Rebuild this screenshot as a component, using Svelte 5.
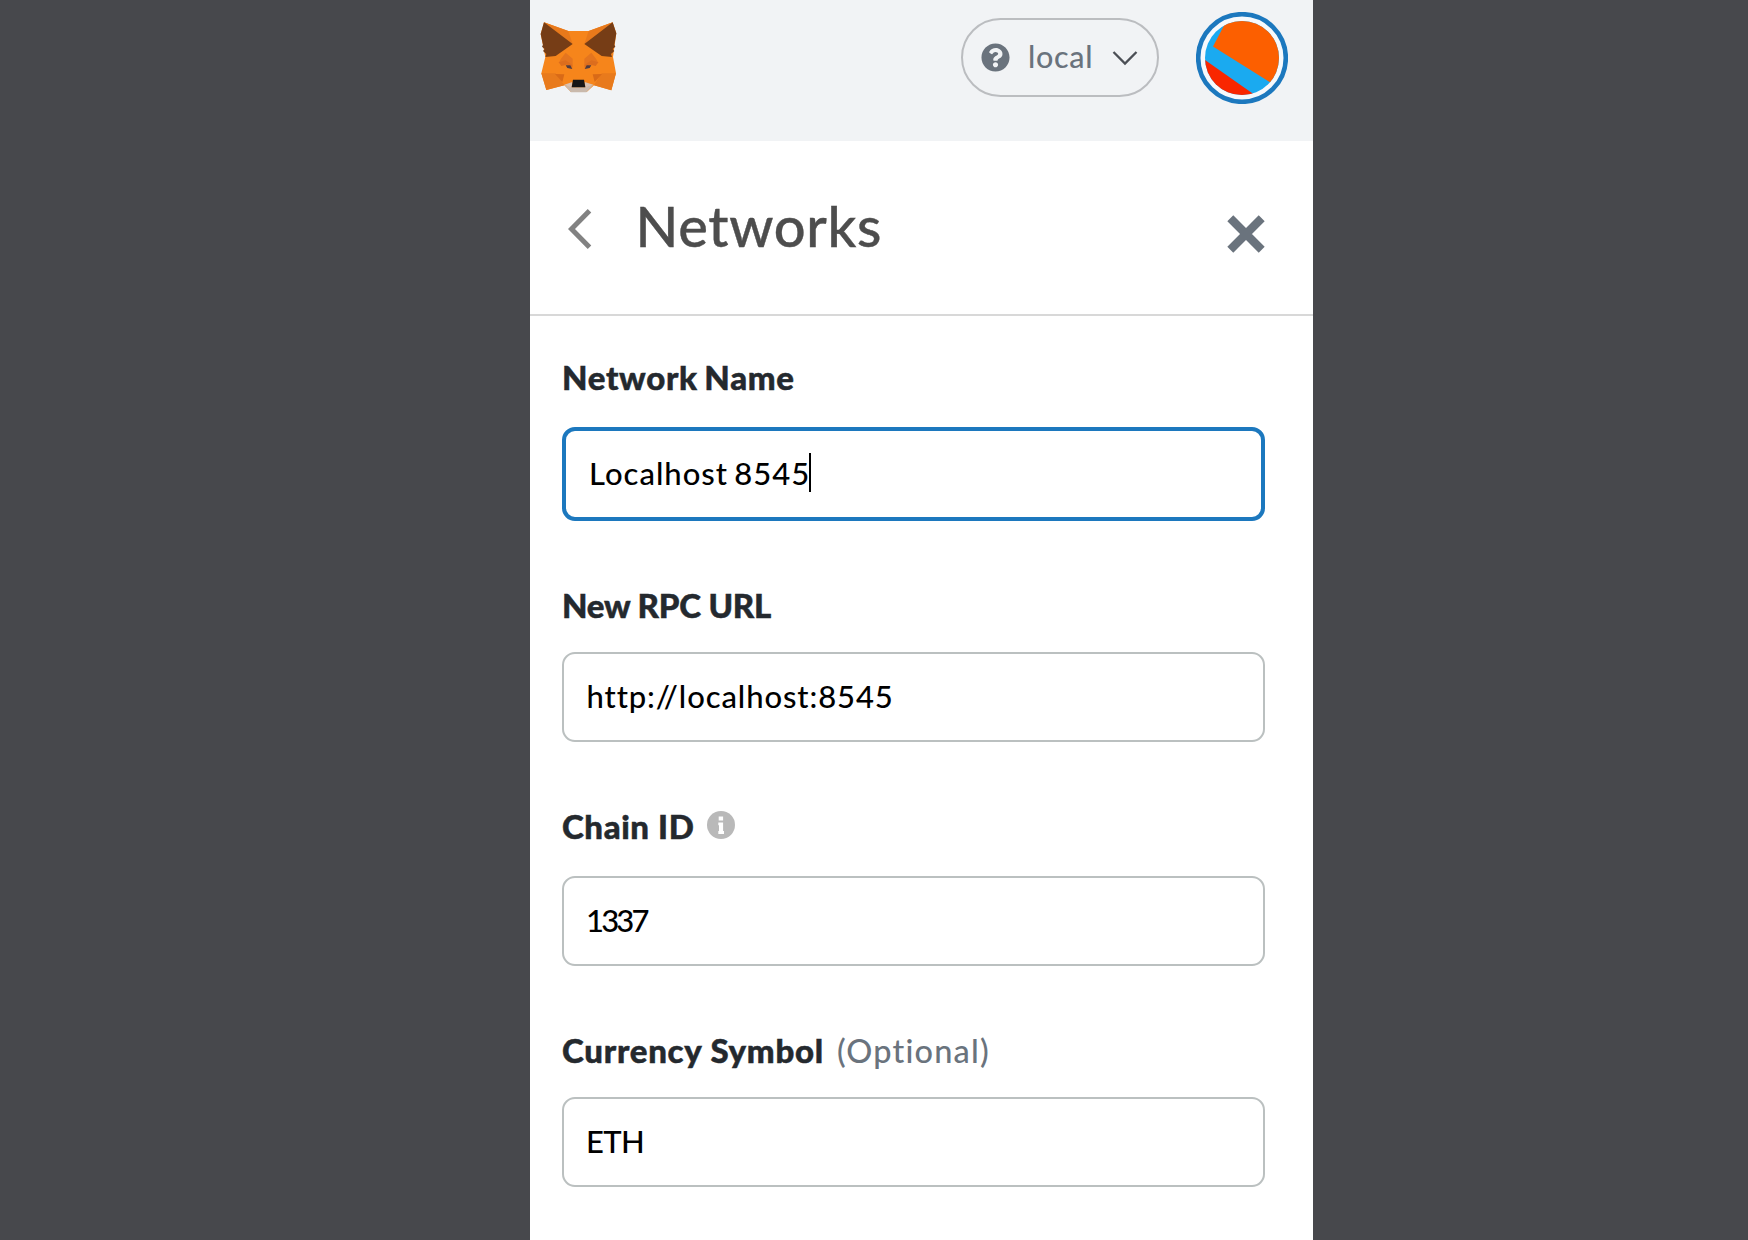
<script>
  const fields = [
    { id: 'name', label: 'Network Name', value: 'Localhost 8545', focused: true },
    { id: 'rpc', label: 'New RPC URL', value: 'http://localhost:8545' },
    { id: 'chain', label: 'Chain ID', value: '1337', info: true },
    { id: 'symbol', label: 'Currency Symbol', value: 'ETH', optional: true }
  ];
</script>

<main class="page">
  <section class="panel">
    <header class="topbar">
      <svg class="fox" viewBox="60 60 231 225" aria-label="MetaMask">
        <path fill="#f6851b" d="M72 67 145 93H206L278 67 289 100 279 171 288 220 274 271 222 256 200 276H153L133 256 79 270 64 220 76 171 62 102Z" />
        <path fill="#e8791b" d="M72 67 145 93 158 132ZM278 67 206 93 193 132Z" />
        <path fill="#e87a1c" d="M64 220H107L133 256 79 270ZM288 220H245L222 256 274 271Z" />
        <path fill="#763d16" d="M72 67 158 132 107 168 76 171 79 162 69 153 74 147 66 140 69 134 62 102ZM278 67 193 132 245 168 276 171 273 162 283 153 278 147 286 140 283 134 289 100Z" />
        <path fill="#e4751f" d="M123 176 137 158 158 176V196L137 190 116 189ZM228 176 214 158 193 176V196L214 190 235 189Z" />
        <path fill="#dc6d1d" d="M116 187 137 181 158 196 157 203 140 194 124 198ZM235 187 214 181 193 196 194 203 211 194 227 198Z" />
        <path fill="#d96a17" d="M105 222 133 223 127 246ZM246 222 218 223 224 246Z" />
        <path fill="#c9b9ac" d="M133 254 156 262H195L220 254 199 277H153Z" />
        <path fill="#d7c1b3" d="M133 254 157 246 155 263ZM220 254 194 246 196 263Z" />
        <path fill="#513b40" d="M137 196 151 196 157 207 142 204ZM214 196 200 196 194 207 209 204Z" />
        <path fill="#161616" d="M159 239H192L196 262H155Z" />
      </svg>

      <div class="network">
        <svg class="question" viewBox="0 0 512 512">
          <path fill="#6a737d" d="M504 256c0 137-111 248-248 248S8 393 8 256 119 8 256 8s248 111 248 248zM262.700 90c-54.500 0-89.300 23-116.500 63.800-3.500 5.300-2.400 12.400 2.700 16.300l34.700 26.300c5.200 3.900 12.600 3 16.700-2.100 17.900-22.700 30.100-35.800 57.300-35.800 20.400 0 45.700 13.100 45.700 33 0 15-12.400 22.700-32.500 34C247.100 238.500 216 254.900 216 296v4c0 6.600 5.400 12 12 12h56c6.600 0 12-5.400 12-12v-1.300c0-28.500 83.200-29.600 83.200-106.700 0-58-60.200-102-116.500-102zM256 338c-25.400 0-46 20.600-46 46s20.600 46 46 46 46-20.600 46-46-20.600-46-46-46z" />
        </svg>
        <span class="network-name">local</span>
        <svg class="chevron" viewBox="0 0 26 16">
          <path d="M1.500 2 13 13.500 24.500 2" fill="none" stroke="#4b4f55" stroke-width="2.300" />
        </svg>
      </div>

      <svg class="avatar" viewBox="0 0 92 92">
        <defs><clipPath id="disc"><circle cx="46" cy="46" r="37" /></clipPath></defs>
        <circle cx="46" cy="46" r="43.800" fill="#f6f9fc" stroke="#1c78be" stroke-width="4.600" />
        <g clip-path="url(#disc)">
          <rect width="92" height="92" fill="#1aaaf0" />
          <path fill="#fc5f00" d="M33 4 17 34.500 83 76 96 40V0Z" />
          <path fill="#f92600" d="M6 46 66 88 0 92Z" />
        </g>
      </svg>
    </header>

    <div class="titlebar">
      <svg class="back" viewBox="0 0 24 40">
        <path d="M21.500 1.800 3.500 20 21.500 38.200" fill="none" stroke="#828282" stroke-width="5" />
      </svg>
      <h1>Networks</h1>
      <svg class="close" viewBox="0 0 38 38">
        <path d="M3.300 3.300 34.700 34.700M34.700 3.300 3.300 34.700" fill="none" stroke="#6a737d" stroke-width="8.400" />
      </svg>
    </div>

    <form class="form">
      {#each fields as field (field.id)}
        <div class="field {field.id}">
          <div class="label">
            <span class="label-text">{field.label}</span>
            {#if field.info}
              <svg class="info" viewBox="0 0 28 28">
                <circle cx="14" cy="14" r="14" fill="#b9b9b9" />
                <path fill="#fff" d="M11.700 5.500h4.400v4h-4.400zM11.300 11.500h4.800v8.600h.9v2.800h-5.700v-2.800h.7v-5.800h-.7z" />
              </svg>
            {/if}
            {#if field.optional}<span class="optional">(Optional)</span>{/if}
          </div>
          <div class="input" class:focused={field.focused}>
            <span class="value">{field.value}</span>
            {#if field.focused}<span class="caret"></span>{/if}
          </div>
        </div>
      {/each}
    </form>
  </section>
</main>

<style>
  :global(body) { background: #47484c; }
  .page {
    box-sizing: border-box;
    height: 1240px;
    padding-left: 529.500px;
    background: #47484c;
    font-family: Lato, "Open Sans", sans-serif;
    font-weight: 500;
    overflow: hidden;
  }
  .panel { width: 783.900px; height: 1240px; background: #fff; }
  svg { display: block; flex: none; }

  .topbar {
    box-sizing: border-box;
    display: flex;
    align-items: flex-start;
    height: 140.5px;
    padding-left: 10.500px;
    background: #f1f3f5;
  }
  .fox { width: 77px; height: 75px; margin-top: 20px; }
  .network {
    box-sizing: border-box;
    display: flex;
    align-items: center;
    width: 198px;
    height: 79px;
    margin: 18px 0 0 344px;
    padding-left: 17.500px;
    border: 2px solid #bbbdc0;
    border-radius: 40px;
  }
  .question { width: 29px; height: 29px; }
  .network-name {
    width: 83.500px;
    margin-left: 18.500px;
    font-size: 30.500px;
    line-height: 40px;
    padding-bottom: 3px;
    letter-spacing: .7px;
    color: #6a737d;
  }
  .chevron { width: 26px; height: 16px; }
  .avatar { width: 92px; height: 92px; margin: 11.500px 0 0 37px; }

  .titlebar {
    box-sizing: border-box;
    display: flex;
    align-items: flex-start;
    height: 175.500px;
    padding-left: 38px;
    border-bottom: 2px solid #d8d8d8;
  }
  .back { width: 24px; height: 40px; margin-top: 68px; }
  h1 {
    width: 560px;
    margin: 50px 0 0 44px;
    font-size: 56px;
    line-height: 70px;
    font-weight: 500;
    letter-spacing: .7px;
    color: #4d4d4d;
    -webkit-text-stroke: .4px #4d4d4d;
  }
  .close { width: 38px; height: 38px; margin: 74px 0 0 31.500px; }

  .form { padding: 42px 48.400px 0 32.500px; }
  .field { display: flex; flex-direction: column; gap: 27px; }
  .name { margin-top: -.8px; gap: 29.400px; }
  .rpc { margin-top: 64.900px; }
  .chain { margin-top: 64px; gap: 29.500px; }
  .symbol { margin-top: 64.500px; }

  .label { display: flex; align-items: center; height: 40px; line-height: 40px; }
  .label-text {
    font-size: 33px;
    font-weight: 900;
    color: #24292e;
    letter-spacing: .6px;
    white-space: nowrap;
    -webkit-text-stroke: .5px #24292e;
  }
  .name .label-text { word-spacing: -2px; letter-spacing: .7px; }
  .rpc .label-text { letter-spacing: -.2px; }
  .symbol .label-text { letter-spacing: .75px; }
  .optional { margin: 1px 0 0 13px; font-size: 32.500px; letter-spacing: 1.200px; color: #6a737d; }
  .info { width: 28px; height: 28px; margin: -3px 0 0 13px; }

  .input {
    box-sizing: border-box;
    display: flex;
    align-items: center;
    height: 90px;
    padding: 0 0 2px 22px;
    border: 2px solid #bbc0c0;
    border-radius: 13px;
    font-size: 31px;
    line-height: 40px;
    color: #000;
  }
  .input.focused { height: 94px; border: 4px solid #1c78be; padding-left: 23px; }
  .name .value { letter-spacing: 1px; word-spacing: -2.500px; }
  .rpc .value { letter-spacing: .9px; padding-left: .5px; }
  .chain .value { letter-spacing: -2.800px; }
  .symbol .value { letter-spacing: -.6px; }
  .caret { width: 2px; height: 39px; margin-left: -1.500px; background: #000; }
</style>
